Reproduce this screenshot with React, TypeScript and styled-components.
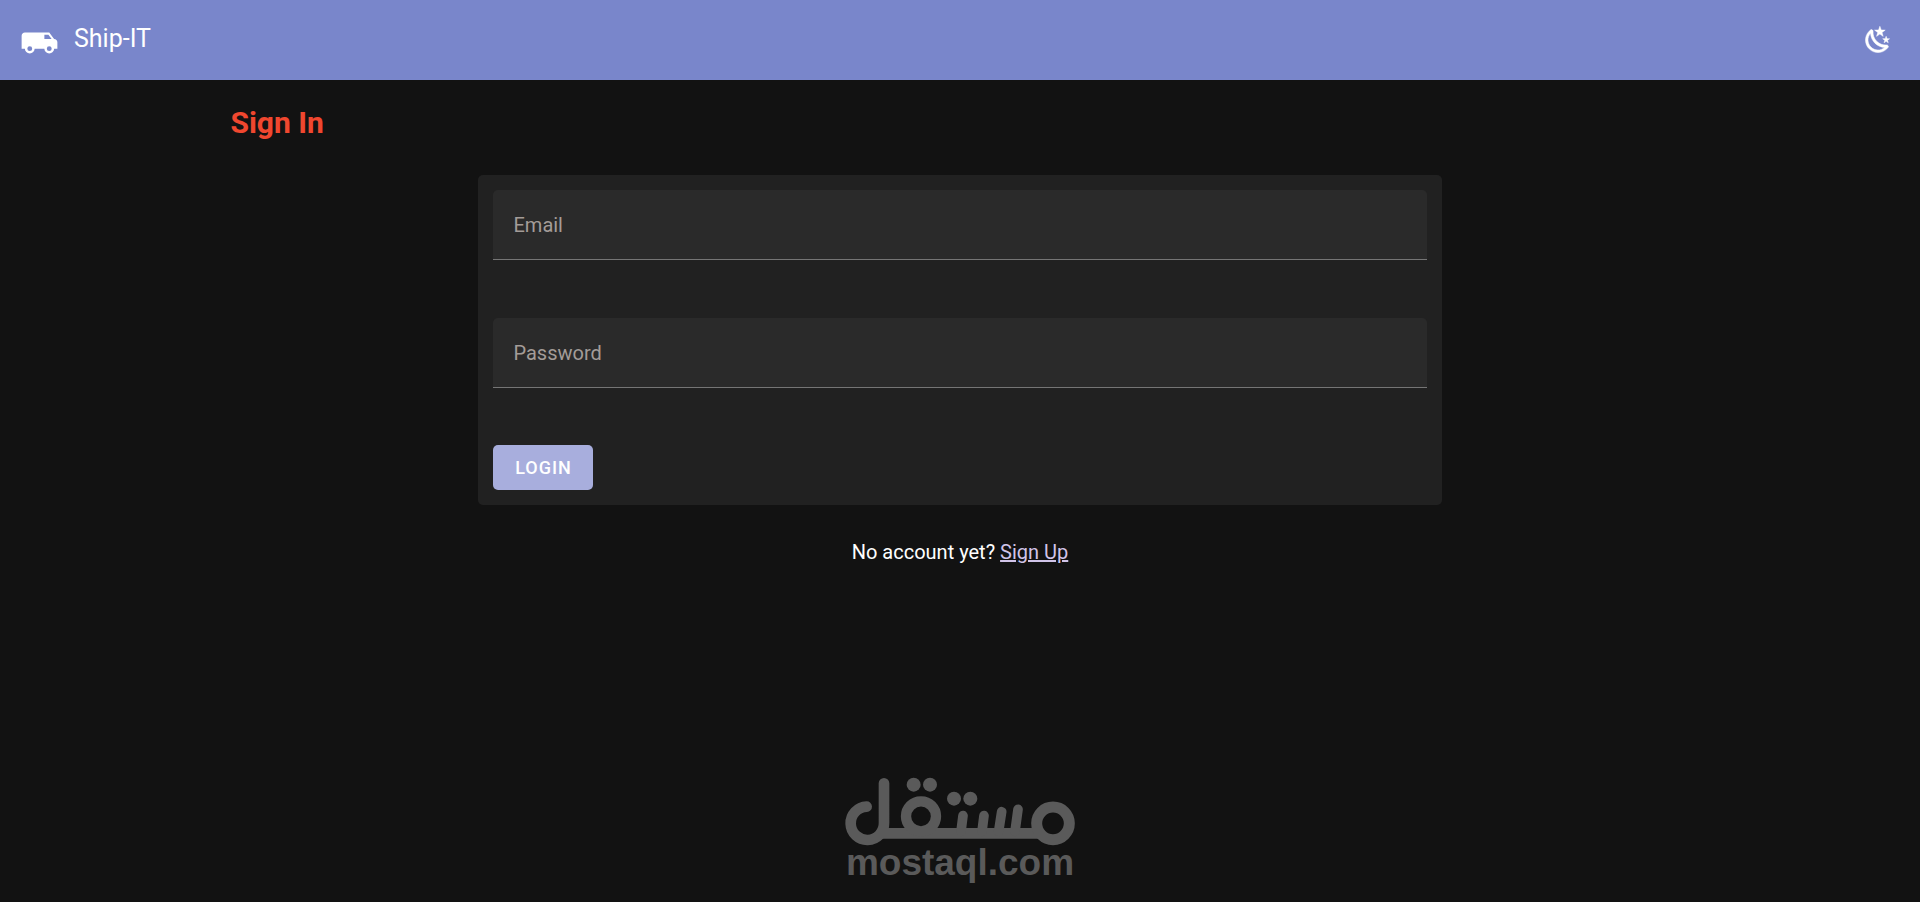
import React, { useState } from "react";
import styled, { createGlobalStyle } from "styled-components";

const GlobalStyle = createGlobalStyle`
  *, *::before, *::after { box-sizing: border-box; }
  body {
    margin: 0;
    background: #121212;
    color: #ffffff;
    font-family: Roboto, "Liberation Sans", sans-serif;
    font-size: 20px;
    line-height: 30px;
  }
`;

const Page = styled.div`
  min-height: 100vh;
  display: flex;
  flex-direction: column;
`;

const AppBar = styled.header`
  display: flex;
  align-items: center;
  justify-content: space-between;
  height: 80px;
  padding: 0 19px 0 20px;
  background: #7986cb;
`;

const Brand = styled.div`
  display: flex;
  align-items: center;
  gap: 15px;
`;

const BrandName = styled.span`
  padding-bottom: 2px;
  font-size: 25px;
`;

const Icon = styled.svg<{ $size: number }>`
  display: block;
  width: ${(p) => p.$size}px;
  height: ${(p) => p.$size}px;
  fill: #ffffff;
`;

const IconButton = styled.button`
  padding: 8px;
  border: 0;
  border-radius: 50%;
  background: transparent;
  cursor: pointer;
`;

const Main = styled.main`
  flex: 1;
  display: flex;
  flex-direction: column;
  width: 76%;
  margin: 0 auto;
  padding-top: 20px;
`;

const Title = styled.h1`
  margin: 0 0 30px;
  color: #f0472f;
  font-size: 30px;
  font-weight: 700;
  line-height: 45px;
`;

const Card = styled.form`
  display: flex;
  flex-direction: column;
  align-items: flex-start;
  width: 66%;
  margin: 0 auto;
  padding: 15px;
  border-radius: 5px;
  background: #212121;
`;

const TextField = styled.input`
  width: 100%;
  height: 70px;
  margin-bottom: 58px;
  padding: 0 20px;
  border: 0;
  border-bottom: 1px solid #757575;
  border-radius: 5px 5px 0 0;
  outline: 0;
  background: #2a2a2a;
  color: #ffffff;
  font: inherit;

  &::placeholder {
    color: #a39c98;
    opacity: 1;
  }

  &:last-of-type {
    margin-bottom: 57px;
  }
`;

const LoginButton = styled.button`
  width: 100px;
  height: 45px;
  padding: 0;
  border: 0;
  border-radius: 5px;
  background: #a8aedd;
  color: #ffffff;
  font: 500 18px Roboto, "Liberation Sans", sans-serif;
  letter-spacing: 1px;
  cursor: pointer;
`;

const SignUpHint = styled.p`
  margin: 32px 0 0;
  text-align: center;

  a {
    color: #d1c4e9;
  }
`;

const Footer = styled.footer`
  display: flex;
  justify-content: center;
  padding-bottom: 18px;
  color: #5a5a5a;
`;

const Logo = styled.svg`
  display: block;
  width: 230px;
  height: 107px;
  font: 700 111px "Liberation Sans", Arial, sans-serif;
`;

const VAN =
  "M3,7C1.89,7 1,7.89 1,9V17H3A3,3 0 0,0 6,20A3,3 0 0,0 9,17H15A3,3 0 0,0 18,20A3,3 0 0,0 21,17H23V13C23,11.89 22.11,11 21,11L18,7H3M15,8.5H17.5L19.46,11H15V8.5M6,15.5A1.5,1.5 0 0,1 7.5,17A1.5,1.5 0 0,1 6,18.5A1.5,1.5 0 0,1 4.5,17A1.5,1.5 0 0,1 6,15.5M18,15.5A1.5,1.5 0 0,1 19.5,17A1.5,1.5 0 0,1 18,18.5A1.5,1.5 0 0,1 16.5,17A1.5,1.5 0 0,1 18,15.5Z";

const NIGHT =
  "M17.75,4.09L15.22,6.03L16.13,9.09L13.5,7.28L10.87,9.09L11.78,6.03L9.25,4.09L12.44,4L13.5,1L14.56,4L17.75,4.09M21.25,11L19.61,12.25L20.2,14.23L18.5,13.06L16.8,14.23L17.39,12.25L15.75,11L17.81,10.95L18.5,9L19.19,10.95L21.25,11M18.97,15.95C19.8,15.87 20.69,17.05 20.16,17.8C19.84,18.25 19.5,18.67 19.08,19.07C15.17,23 8.84,23 4.94,19.07C1.03,15.17 1.03,8.83 4.94,4.93C5.34,4.53 5.76,4.17 6.21,3.85C6.96,3.32 8.14,4.21 8.06,5.04C7.79,7.9 8.75,10.87 10.95,13.06C13.14,15.26 16.1,16.22 18.97,15.95M17.33,17.97C14.5,17.81 11.7,16.64 9.53,14.5C7.36,12.31 6.2,9.5 6.04,6.68C3.23,9.82 3.34,14.64 6.35,17.66C9.37,20.67 14.19,20.78 17.33,17.97Z";

const MostaqlLogo = () => (
  <Logo viewBox="45 52 690 321" fill="none" stroke="currentColor" strokeLinecap="round" role="img" aria-label="mostaql.com">
    <path strokeWidth="32" d="M110 141A50 50 0 1 0 162 190V71" />
    <path strokeWidth="32" strokeLinecap="butt" d="M148 221H630" />
    <circle strokeWidth="31" cx="273" cy="170" r="45" />
    <circle strokeWidth="33" cx="669" cy="191" r="49" />
    <path strokeWidth="29" d="M399 168L393 215M462 168L456 215M515 156L506 215M564 149L555 215" />
    <g fill="currentColor" stroke="none">
      <circle cx="251" cy="75" r="21" />
      <circle cx="300" cy="75" r="21" />
      <circle cx="372" cy="117" r="21" />
      <circle cx="421" cy="117" r="21" />
    </g>
    <text x="390" y="347" textAnchor="middle" fill="currentColor" stroke="none">
      mostaql.com
    </text>
  </Logo>
);

export default function App() {
  const [email, setEmail] = useState("");
  const [password, setPassword] = useState("");

  return (
    <Page>
      <GlobalStyle />
      <AppBar>
        <Brand>
          <Icon $size={39} viewBox="0 0 24 24" aria-hidden="true">
            <path d={VAN} />
          </Icon>
          <BrandName>Ship-IT</BrandName>
        </Brand>
        <IconButton type="button" aria-label="Toggle dark mode">
          <Icon $size={30} viewBox="0 0 24 24" aria-hidden="true">
            <path d={NIGHT} stroke="#ffffff" strokeWidth="0.4" />
          </Icon>
        </IconButton>
      </AppBar>
      <Main>
        <Title>Sign In</Title>
        <Card onSubmit={(e) => e.preventDefault()}>
          <TextField
            type="email"
            aria-label="Email"
            placeholder="Email"
            value={email}
            onChange={(e) => setEmail(e.target.value)}
          />
          <TextField
            type="password"
            aria-label="Password"
            placeholder="Password"
            value={password}
            onChange={(e) => setPassword(e.target.value)}
          />
          <LoginButton type="submit">LOGIN</LoginButton>
        </Card>
        <SignUpHint>
          No account yet? <a href="#signup">Sign Up</a>
        </SignUpHint>
      </Main>
      <Footer>
        <MostaqlLogo />
      </Footer>
    </Page>
  );
}
